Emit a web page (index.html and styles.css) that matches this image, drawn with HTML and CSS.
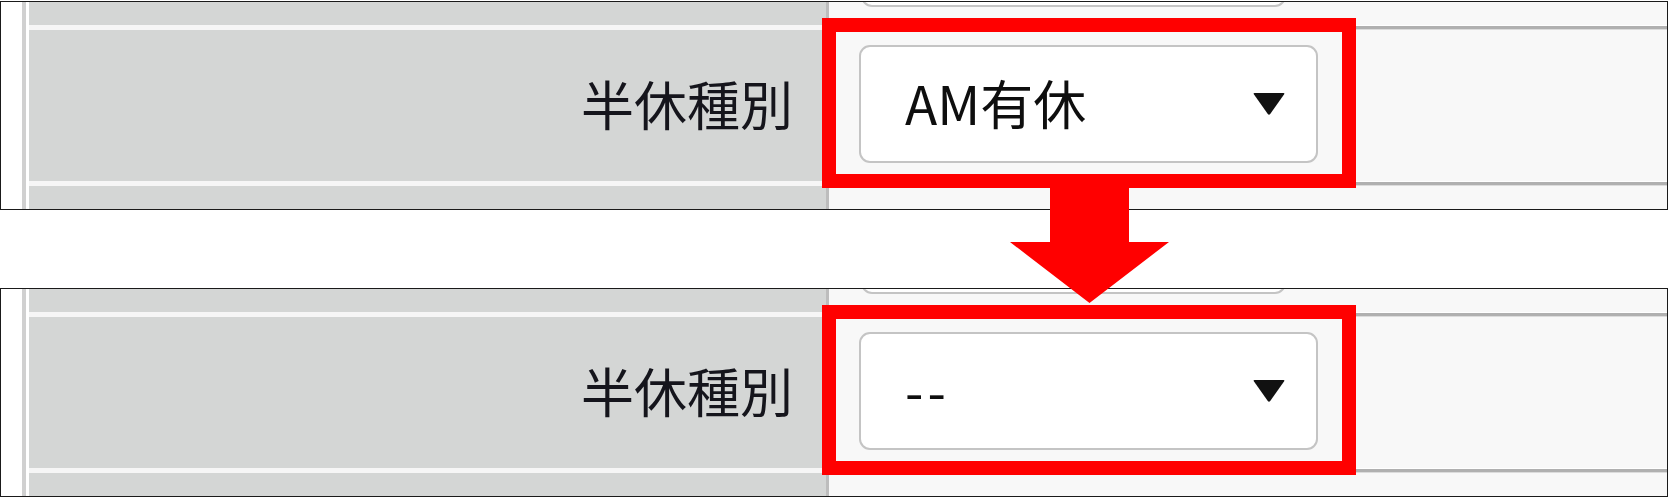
FILE: index.html
```html
<html lang="ja">
<head>
    <meta charset="UTF-8">
    <meta name="viewport" content="width=device-width, initial-scale=1.0">
    <title>半休種別</title>
    <link rel="stylesheet" href="styles.css">
</head>
<body>
    <div class="shot">
        <!-- before -->
        <section class="panel">
            <div class="gutter"></div>
            <div class="table">
                <div class="row row-top">
                    <div class="label"></div>
                    <div class="value value-top"><div class="select select-prev"></div></div>
                </div>
                <div class="row row-main">
                    <div class="label">半休種別</div>
                    <div class="value value-main">
                        <div class="select">
                            <span class="select-text">AM有休</span>
                            <svg class="caret" viewBox="0 0 32 22"><path d="M1.5 0 H30.5 Q32 0 31 1.5 L17.2 21 Q16 22.5 14.8 21 L1 1.5 Q0 0 1.5 0 Z"/></svg>
                        </div>
                    </div>
                </div>
                <div class="row row-bottom">
                    <div class="label"></div>
                    <div class="value"></div>
                </div>
            </div>
        </section>

        <!-- after -->
        <section class="panel panel-after">
            <div class="gutter"></div>
            <div class="table">
                <div class="row row-top">
                    <div class="label"></div>
                    <div class="value value-top"><div class="select select-prev"></div></div>
                </div>
                <div class="row row-main">
                    <div class="label">半休種別</div>
                    <div class="value value-main">
                        <div class="select">
                            <span class="select-text dashes">--</span>
                            <svg class="caret" viewBox="0 0 32 22"><path d="M1.5 0 H30.5 Q32 0 31 1.5 L17.2 21 Q16 22.5 14.8 21 L1 1.5 Q0 0 1.5 0 Z"/></svg>
                        </div>
                    </div>
                </div>
                <div class="row row-bottom">
                    <div class="label"></div>
                    <div class="value"></div>
                </div>
            </div>
        </section>

        <div class="callout callout-before"></div>
        <div class="callout callout-after"></div>
        <svg class="arrow" viewBox="0 0 159 115"><polygon points="40,0 119,0 119,54 159,54 79.5,115 0,54 40,54"/></svg>
    </div>
</body>
</html>
```

FILE: styles.css
```css
body {
    margin: 0;
    background-color: #ffffff;
    font-family: "Noto Sans CJK JP", "Noto Sans", sans-serif;
    color: #15151c;
}

.shot {
    position: relative;
    width: 1669px;
    height: 497px;
    padding-top: 1px;
    box-sizing: border-box;
    overflow: hidden;
}

.panel {
    display: flex;
    width: 1668px;
    height: 209px;
    border: 1px solid #1a1a1a;
    box-sizing: border-box;
    background-color: #ffffff;
    overflow: hidden;
}

.panel-after {
    margin-top: 78px;
}

.gutter {
    flex: none;
    width: 21px;
    border-right: 4px solid #d0d0d0;
    margin-right: 3px;
}

.table {
    flex: 1;
    display: flex;
    flex-direction: column;
}

.row {
    display: grid;
    grid-template-columns: 800px 1fr;
}

.label {
    box-sizing: border-box;
    background-color: #d4d6d5;
    border-right: 3px solid #bdbdbd;
    padding-right: 33px;
    padding-bottom: 5px;
    font-size: 53px;
    line-height: 1;
    text-align: right;
    display: flex;
    align-items: center;
    justify-content: flex-end;
}

.value {
    background-color: #f8f8f8;
    overflow: hidden;
}

.row-top {
    height: 23px;
}

.value-top {
    display: flex;
    align-items: flex-end;
    padding-bottom: 18px;
    padding-left: 32px;
}

.row-main {
    height: 156px;
}

.row-main .label,
.row-bottom .label {
    border-top: 5px solid #f6f6f6;
}

.row-main .value,
.row-bottom .value {
    border-top: 1px solid #ffffff;
    box-shadow: inset 0 3px #b0b0b0, inset 0 4px #dcdcdc;
}

.row-bottom {
    flex: 1;
}

.value-main {
    padding-top: 19px;
    padding-left: 30px;
}

.select {
    box-sizing: border-box;
    display: flex;
    align-items: center;
    justify-content: space-between;
    width: 459px;
    height: 118px;
    padding: 0 31px 0 44px;
    border: 2px solid #c4c4c4;
    border-radius: 11px;
    background-color: #ffffff;
}

.select-prev {
    flex: none;
    width: 425px;
}

.select-text {
    margin-bottom: 4px;
    font-size: 53px;
    line-height: 1;
    color: #0e0e0e;
}

.dashes {
    letter-spacing: 4px;
}

.caret {
    width: 32px;
    height: 22px;
    fill: #111111;
}

.callout {
    position: absolute;
    left: 822px;
    width: 534px;
    height: 170px;
    border: 14px solid #ff0000;
    box-sizing: border-box;
}

.callout-before {
    top: 18px;
}

.callout-after {
    top: 305px;
}

.arrow {
    position: absolute;
    left: 1010px;
    top: 188px;
    width: 159px;
    height: 115px;
    fill: #ff0000;
}
```
